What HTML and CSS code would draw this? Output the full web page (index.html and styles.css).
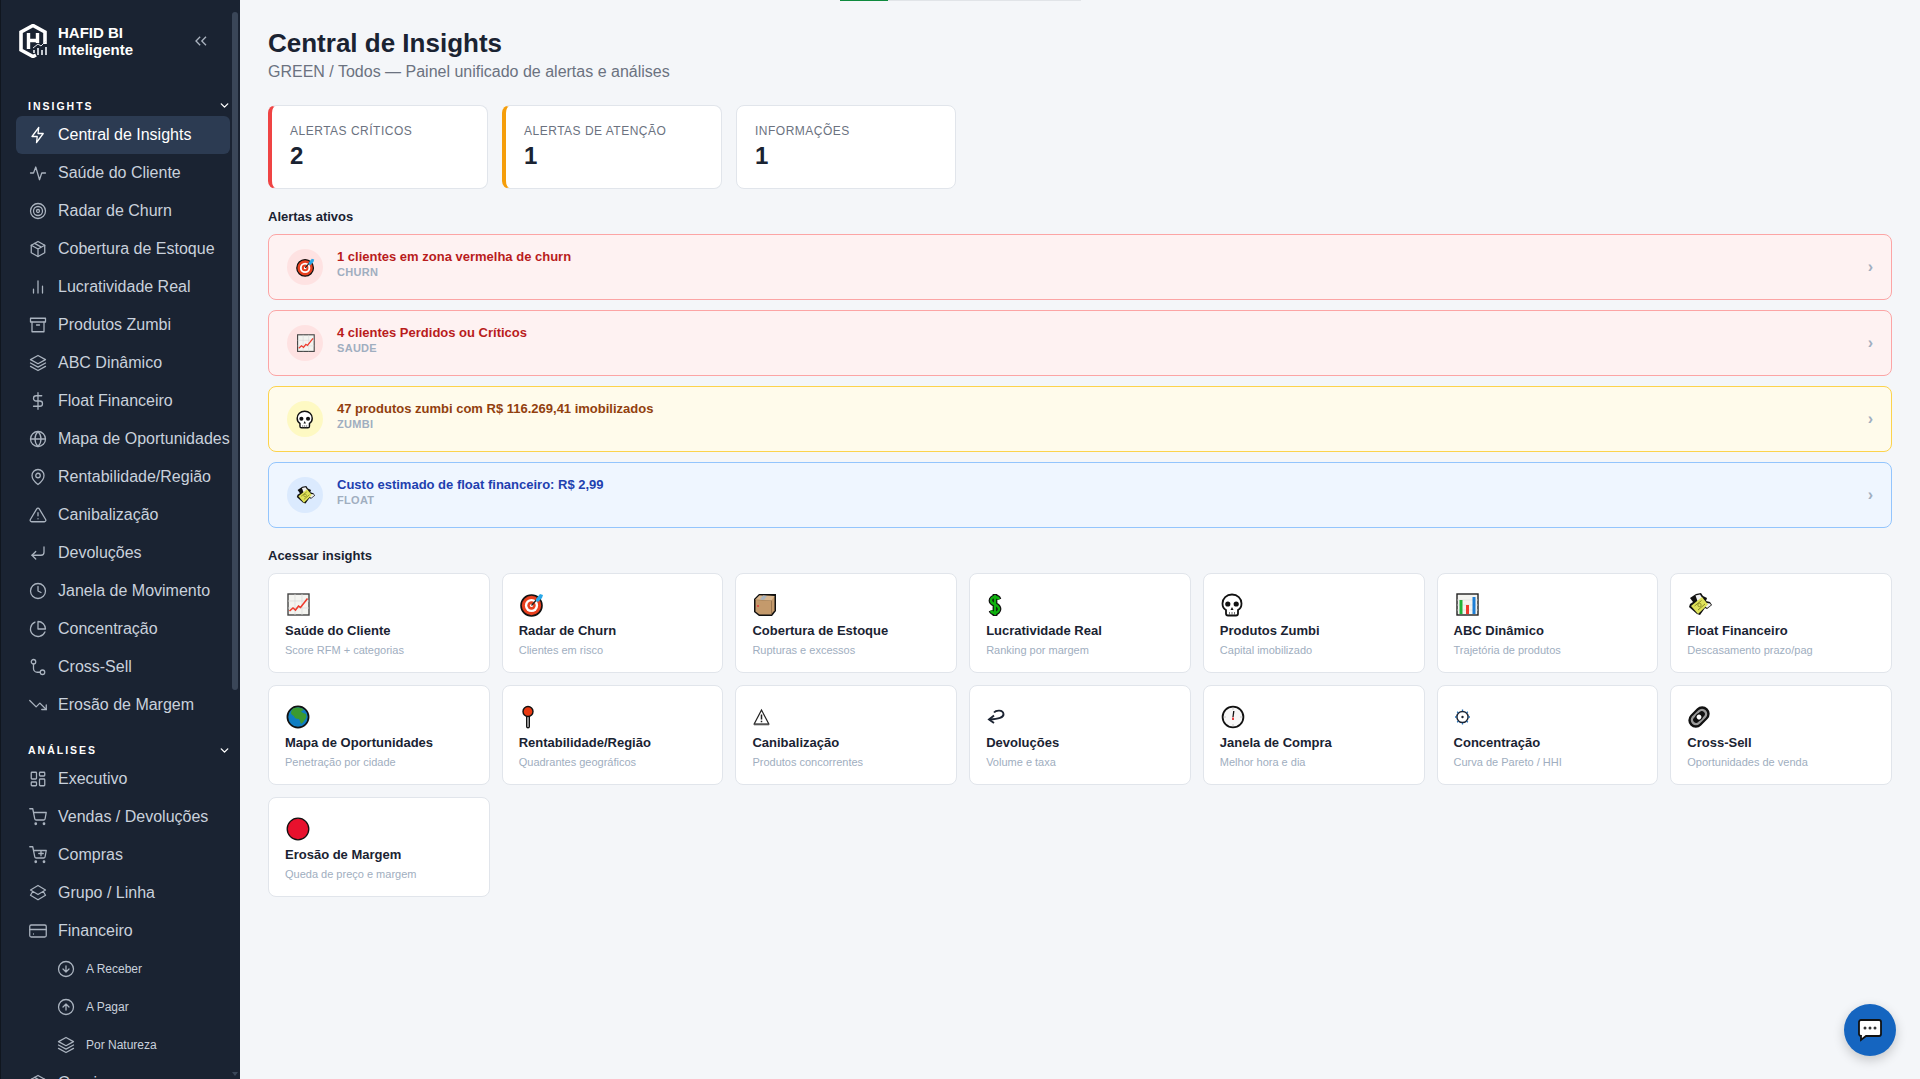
FILE: index.html
```html
<!DOCTYPE html>
<html lang="pt-BR">
<head>
    <meta charset="UTF-8">
    <title>Central de Insights</title>
    <link rel="stylesheet" href="styles.css">
</head>
<body>
    <svg class="defs" width="0" height="0">
        <defs>
            <symbol id="e-chart" viewBox="0 0 24 24"><rect x="2" y="1" width="21" height="21" fill="#f4f4f0" stroke="#444" stroke-width="1.4"/><path d="M2 8h21M2 15h21M9 1v21M16 1v21" stroke="#d8d8d8" stroke-width=".7"/><path d="M3.500 18l3.500-3 2.500 2 3-4 2 1.500 7-9" fill="none" stroke="#ee3a2c" stroke-width="1.6"/></symbol>
            <symbol id="e-target" viewBox="0 0 24 24"><circle cx="11.500" cy="12.500" r="10.500" fill="#e8401f" stroke="#111" stroke-width="1.6"/><circle cx="11.500" cy="12.500" r="6.600" fill="#fff"/><circle cx="11.500" cy="12.500" r="4.200" fill="#e8401f"/><circle cx="11.500" cy="12.500" r="1.600" fill="#fff"/><path d="M11.500 12.500L19 4" stroke="#222" stroke-width="1.4"/><path d="M16 6l4-5 3 1-1 3-4 4-2-1z" fill="#29a8e8"/></symbol>
            <symbol id="e-box" viewBox="0 0 24 24"><path d="M1 6l5-5h17v17l-4 5H6l-5-4z" fill="#111"/><path d="M2.500 6.500l4-4 15 .5v14.500l-3.500 4H6.500l-4-3z" fill="#c49a6c"/><path d="M2.500 6.500l16 1v14" fill="none" stroke="#8f6d47" stroke-width=".8"/><path d="M6.500 2.500l15 .5-3 4.500-16-1z" fill="#d9b78f"/><path d="M10 2.500l4 .5-3 4-4-.5z" fill="#aab4be"/><circle cx="5" cy="13" r="1" fill="#e23b3b"/></symbol>
            <symbol id="e-dollar" viewBox="0 0 24 24"><path d="M12 6.500C11.500 5 10 4 8 4S4 5.500 4 7.500c0 5 8 3 8 8.500 0 2-2 4-4 4s-3.500-1-4-2.500M8 1v22" fill="none" stroke="#111" stroke-width="4.800"/><path d="M12 6.500C11.500 5 10 4 8 4S4 5.500 4 7.500c0 5 8 3 8 8.500 0 2-2 4-4 4s-3.500-1-4-2.500M8 2v20" fill="none" stroke="#0eb10e" stroke-width="2.400"/></symbol>
            <symbol id="e-skull" viewBox="0 0 24 24"><path d="M11 1.500C5.500 1.500 1.500 5.500 1.500 10.500c0 3.500 1.500 5.500 3.500 6.500v3.500c0 1 1 2 2 2h8c1 0 2-1 2-2V17c2-1 3.500-3 3.500-6.500 0-5-4-9-9.500-9z" fill="#fff" stroke="#111" stroke-width="1.8"/><circle cx="6.800" cy="11" r="2.600" fill="#111"/><circle cx="15.200" cy="11" r="2.600" fill="#111"/><path d="M11 14l-1.500 3h3z" fill="#111"/><path d="M8.500 19v3M11 19v3M13.500 19v3" stroke="#666" stroke-width=".9"/></symbol>
            <symbol id="e-bars" viewBox="0 0 24 24"><rect x="2" y="1" width="21" height="21" fill="#f4f4f0" stroke="#222" stroke-width="1.4"/><path d="M2 7h21M2 12h21M2 17h21" stroke="#ddd" stroke-width=".6"/><rect x="4.500" y="7" width="3" height="14" fill="#22b33a"/><rect x="11" y="12" width="3" height="9" fill="#ee3a2c"/><rect x="17.500" y="4" width="3" height="17" fill="#1e7fd6"/></symbol>
            <symbol id="e-wings" viewBox="0 0 24 24"><path d="M8 1l5-1 2 3 4 2-1 3 4 1 2 3-5 4-2-1-5 7-3-1-8-7 1-3 3-2-3-4z" fill="#111"/><path d="M7.500 2.500l4.500-1 3 4.500-5 3.500zM18.500 10l3.500.5 1 1.500-4 3-2.500-2.500z" fill="#f2f2f2"/><path d="M3 13l11-9 6 7.500-10 9.500z" fill="#dfe25a"/><path d="M6.500 13l7-5.500M10 17l7-6" stroke="#7d7f1e" stroke-width=".9"/><circle cx="11.500" cy="12" r="1.700" fill="none" stroke="#7d7f1e" stroke-width=".8"/></symbol>
            <symbol id="e-globe" viewBox="0 0 24 24"><circle cx="12" cy="12" r="10.600" fill="#0f7dc2" stroke="#111" stroke-width="1.7"/><path d="M7 3.500c3-1.500 7-1.500 10 .5 1 1 0 2-2 2 1 2 3 2 5 3 .5 2 .5 3 0 4-2 3-3 5-5 6-1-2-1-4-2-5-3 0-5-1-5-3-2-1-3-2-3-3 0-2 1-3 2-4.500z" fill="#3c9a32"/></symbol>
            <symbol id="e-pin" viewBox="0 0 24 24"><path d="M6.700 11h2.600v10.500a1.300 1.300 0 0 1-2.600 0z" fill="#e6e6e6" stroke="#111" stroke-width="1.4"/><circle cx="8" cy="6.500" r="5" fill="#ea3a12" stroke="#111" stroke-width="1.4"/></symbol>
            <symbol id="e-warn" viewBox="0 0 24 24"><path d="M8.500 5L1.200 19h14.600z" fill="#fff" stroke="#222" stroke-width="1.2"/><path d="M1 19.500h15" stroke="#555" stroke-width="1.6"/><path d="M8.500 9.500v5M8.500 15.800v1.500" stroke="#222" stroke-width="1.5"/></symbol>
            <symbol id="e-back" viewBox="0 0 24 24"><path d="M7 7.500c2-2.500 9-3 9.500 1.500.4 3.500-5 5-14 5.500" fill="none" stroke="#1c2433" stroke-width="1.9"/><path d="M7 10.500l-5 4 5 3.500" fill="none" stroke="#1c2433" stroke-width="1.9"/></symbol>
            <symbol id="e-clock" viewBox="0 0 24 24"><circle cx="12" cy="12" r="10.400" fill="#f7f7f7" stroke="#111" stroke-width="1.8"/><path d="M12 12l.8-6" stroke="#111" stroke-width="1.3"/><path d="M12 12.500V15" stroke="#e02020" stroke-width="1.7"/><path d="M12 3.500v1M12 19.500v1M3.500 12h1M19.500 12h1" stroke="#999"/></symbol>
            <symbol id="e-gear" viewBox="0 0 24 24"><circle cx="7.500" cy="12" r="5.600" fill="#fff" stroke="#1c2433" stroke-width="1.5"/><circle cx="7.500" cy="12" r="1.200" fill="#1c2433"/><path d="M7.500 4.500v1.500M7.500 18v1.500M0 12h1.500M13.500 12H15M2.200 6.700l1 1M11.800 16.300l1 1M2.200 17.300l1-1M11.800 7.700l1-1" stroke="#1c6fb8" stroke-width="1.3"/></symbol>
            <symbol id="e-clip" viewBox="0 0 24 24"><g transform="rotate(-45 11 12)"><rect x="-1" y="4.500" width="24" height="15" rx="7.500" fill="#111"/><rect x="1.500" y="6.800" width="19" height="10.400" rx="5.200" fill="#9a9a9a"/><rect x="4" y="9" width="14" height="6" rx="3" fill="#111"/><circle cx="11" cy="12" r="3.600" fill="#111"/><circle cx="11" cy="12" r="2.400" fill="#fff"/></g></symbol>
            <symbol id="e-dot" viewBox="0 0 24 24"><circle cx="12" cy="12" r="10.800" fill="#e8112d" stroke="#111" stroke-width="1.3"/></symbol>

            <symbol id="i-bolt" viewBox="0 0 24 24"><path d="M13 2L4 14h7l-1 8 9-12h-7z"/></symbol>
            <symbol id="i-pulse" viewBox="0 0 24 24"><path d="M2 12h4l3-8 5 17 3-9h5"/></symbol>
            <symbol id="i-radar" viewBox="0 0 24 24"><circle cx="12" cy="12" r="10"/><circle cx="12" cy="12" r="6"/><circle cx="12" cy="12" r="2"/></symbol>
            <symbol id="i-box" viewBox="0 0 24 24"><path d="M12 2l9 5v10l-9 5-9-5V7z"/><path d="M3 7l9 5 9-5M12 12v10M7.500 4.500l9 5"/></symbol>
            <symbol id="i-bars" viewBox="0 0 24 24"><path d="M12 20V4M18 20v-9M6 20v-5"/></symbol>
            <symbol id="i-archive" viewBox="0 0 24 24"><rect x="2" y="3" width="20" height="5"/><path d="M4 8v13h16V8M10 12h4"/></symbol>
            <symbol id="i-layers" viewBox="0 0 24 24"><path d="M12 2L2 7.500 12 13l10-5.500zM2 12l10 5.500L22 12M2 16.500L12 22l10-5.500"/></symbol>
            <symbol id="i-dollar" viewBox="0 0 24 24"><path d="M12 1v22M17 5H9.500a3.500 3.500 0 0 0 0 7h5a3.500 3.500 0 0 1 0 7H6"/></symbol>
            <symbol id="i-globe" viewBox="0 0 24 24"><circle cx="12" cy="12" r="10"/><path d="M2 12h20M12 2c3 3 4 6.500 4 10s-1 7-4 10c-3-3-4-6.500-4-10s1-7 4-10z"/></symbol>
            <symbol id="i-pin" viewBox="0 0 24 24"><path d="M20 10c0 6-8 12-8 12s-8-6-8-12a8 8 0 0 1 16 0z"/><circle cx="12" cy="10" r="3"/></symbol>
            <symbol id="i-warn" viewBox="0 0 24 24"><path d="M10.300 3.900L1.800 18a2 2 0 0 0 1.700 3h17a2 2 0 0 0 1.700-3L13.700 3.900a2 2 0 0 0-3.400 0zM12 9v4M12 17h.01"/></symbol>
            <symbol id="i-return" viewBox="0 0 24 24"><path d="M9 10l-5 5 5 5"/><path d="M20 4v7a4 4 0 0 1-4 4H4"/></symbol>
            <symbol id="i-clock" viewBox="0 0 24 24"><circle cx="12" cy="12" r="10"/><path d="M12 6v6l4 2"/></symbol>
            <symbol id="i-pie" viewBox="0 0 24 24"><path d="M21.200 15.900A10 10 0 1 1 8 2.800"/><path d="M22 12A10 10 0 0 0 12 2v10z"/></symbol>
            <symbol id="i-route" viewBox="0 0 24 24"><circle cx="6" cy="5" r="3"/><circle cx="18" cy="19" r="3"/><path d="M6 8v6a5 5 0 0 0 5 5h4"/></symbol>
            <symbol id="i-down" viewBox="0 0 24 24"><path d="M1 6l8.500 8.500 5-5L23 18"/><path d="M17 18h6v-6"/></symbol>
            <symbol id="i-grid" viewBox="0 0 24 24"><rect x="3" y="3" width="7" height="9" rx="1"/><rect x="14" y="3" width="7" height="5" rx="1"/><rect x="14" y="12" width="7" height="9" rx="1"/><rect x="3" y="16" width="7" height="5" rx="1"/></symbol>
            <symbol id="i-cart" viewBox="0 0 24 24"><circle cx="9" cy="21" r="1"/><circle cx="20" cy="21" r="1"/><path d="M1 1h4l2.700 13.400a2 2 0 0 0 2 1.600h9.700a2 2 0 0 0 2-1.600L23 6H6"/></symbol>
            <symbol id="i-cartplus" viewBox="0 0 24 24"><circle cx="9" cy="21" r="1"/><circle cx="20" cy="21" r="1"/><path d="M1 1h4l2.700 13.400a2 2 0 0 0 2 1.600h9.700a2 2 0 0 0 2-1.600L23 6H6M16 7v6M13 10h6"/></symbol>
            <symbol id="i-stack" viewBox="0 0 24 24"><path d="M12 2L2 8l10 6 10-6zM2 15l10 6 10-6M5 10l-3 5M19 10l3 5"/></symbol>
            <symbol id="i-card" viewBox="0 0 24 24"><rect x="1" y="4" width="22" height="16" rx="2"/><path d="M1 10h22M6 16h.01"/></symbol>
            <symbol id="i-circdown" viewBox="0 0 24 24"><circle cx="12" cy="12" r="10"/><path d="M8 12l4 4 4-4M12 8v8"/></symbol>
            <symbol id="i-circup" viewBox="0 0 24 24"><circle cx="12" cy="12" r="10"/><path d="M16 12l-4-4-4 4M12 16V8"/></symbol>
            <symbol id="i-chev" viewBox="0 0 24 24"><path d="M6 9l6 6 6-6"/></symbol>
        </defs>
    </svg>

    <div class="layout">
        <aside class="sidebar">
            <div class="brand">
                <svg class="brand-logo" viewBox="0 0 28 34">
                    <path d="M17 31L14 32.500 2 26V8L14 1.500 26 8v12" fill="none" stroke="#fff" stroke-width="3.600"/>
                    <path d="M9.500 9v16M18.500 9v10M9.500 16.500h9" fill="none" stroke="#fff" stroke-width="3.400"/>
                    <path d="M15 29v-3M19 31v-7M23 31v-5M27 31v-8" fill="none" stroke="#c4c9d0" stroke-width="2"/>
                    <path d="M14 24l5-4 3 2 5-5" fill="none" stroke="#e6e8ec" stroke-width="1"/>
                </svg>
                <div class="brand-name">HAFID BI<br>Inteligente</div>
                <svg class="brand-toggle" viewBox="0 0 24 24"><path d="M11 17l-5-5 5-5M18 17l-5-5 5-5"/></svg>
            </div>

            <div class="nav-section">
                <span>INSIGHTS</span>
                <svg class="ico nav-chev"><use href="#i-chev"/></svg>
            </div>
            <a class="nav-item active"><svg class="ico"><use href="#i-bolt"/></svg>Central de Insights</a>
            <a class="nav-item"><svg class="ico"><use href="#i-pulse"/></svg>Saúde do Cliente</a>
            <a class="nav-item"><svg class="ico"><use href="#i-radar"/></svg>Radar de Churn</a>
            <a class="nav-item"><svg class="ico"><use href="#i-box"/></svg>Cobertura de Estoque</a>
            <a class="nav-item"><svg class="ico"><use href="#i-bars"/></svg>Lucratividade Real</a>
            <a class="nav-item"><svg class="ico"><use href="#i-archive"/></svg>Produtos Zumbi</a>
            <a class="nav-item"><svg class="ico"><use href="#i-layers"/></svg>ABC Dinâmico</a>
            <a class="nav-item"><svg class="ico"><use href="#i-dollar"/></svg>Float Financeiro</a>
            <a class="nav-item"><svg class="ico"><use href="#i-globe"/></svg>Mapa de Oportunidades</a>
            <a class="nav-item"><svg class="ico"><use href="#i-pin"/></svg>Rentabilidade/Região</a>
            <a class="nav-item"><svg class="ico"><use href="#i-warn"/></svg>Canibalização</a>
            <a class="nav-item"><svg class="ico"><use href="#i-return"/></svg>Devoluções</a>
            <a class="nav-item"><svg class="ico"><use href="#i-clock"/></svg>Janela de Movimento</a>
            <a class="nav-item"><svg class="ico"><use href="#i-pie"/></svg>Concentração</a>
            <a class="nav-item"><svg class="ico"><use href="#i-route"/></svg>Cross-Sell</a>
            <a class="nav-item"><svg class="ico"><use href="#i-down"/></svg>Erosão de Margem</a>

            <div class="nav-section second">
                <span>ANÁLISES</span>
                <svg class="ico nav-chev"><use href="#i-chev"/></svg>
            </div>
            <a class="nav-item"><svg class="ico"><use href="#i-grid"/></svg>Executivo</a>
            <a class="nav-item"><svg class="ico"><use href="#i-cart"/></svg>Vendas / Devoluções</a>
            <a class="nav-item"><svg class="ico"><use href="#i-cartplus"/></svg>Compras</a>
            <a class="nav-item"><svg class="ico"><use href="#i-stack"/></svg>Grupo / Linha</a>
            <a class="nav-item"><svg class="ico"><use href="#i-card"/></svg>Financeiro</a>
            <a class="nav-item sub"><svg class="ico"><use href="#i-circdown"/></svg>A Receber</a>
            <a class="nav-item sub"><svg class="ico"><use href="#i-circup"/></svg>A Pagar</a>
            <a class="nav-item sub"><svg class="ico"><use href="#i-layers"/></svg>Por Natureza</a>
            <a class="nav-item"><svg class="ico"><use href="#i-box"/></svg>Gerais</a>

            <div class="scroll-thumb"></div>
            <div class="scroll-arrow"></div>
        </aside>

        <main class="content">
            <div class="progress"><div class="progress-fill"></div></div>

            <h1>Central de Insights</h1>
            <p class="subtitle">GREEN / Todos — Painel unificado de alertas e análises</p>

            <div class="stats">
                <div class="stat critical"><div class="stat-label">Alertas críticos</div><div class="stat-value">2</div></div>
                <div class="stat warning"><div class="stat-label">Alertas de atenção</div><div class="stat-value">1</div></div>
                <div class="stat"><div class="stat-label">Informações</div><div class="stat-value">1</div></div>
            </div>

            <h2>Alertas ativos</h2>
            <div class="alerts">
                <div class="alert red">
                    <div class="alert-icon"><svg class="emoji-sm"><use href="#e-target"/></svg></div>
                    <div class="alert-text"><div class="alert-title">1 clientes em zona vermelha de churn</div><div class="alert-tag">CHURN</div></div>
                    <span class="alert-arrow">›</span>
                </div>
                <div class="alert red">
                    <div class="alert-icon"><svg class="emoji-sm"><use href="#e-chart"/></svg></div>
                    <div class="alert-text"><div class="alert-title">4 clientes Perdidos ou Críticos</div><div class="alert-tag">SAUDE</div></div>
                    <span class="alert-arrow">›</span>
                </div>
                <div class="alert yellow">
                    <div class="alert-icon"><svg class="emoji-sm"><use href="#e-skull"/></svg></div>
                    <div class="alert-text"><div class="alert-title">47 produtos zumbi com R$ 116.269,41 imobilizados</div><div class="alert-tag">ZUMBI</div></div>
                    <span class="alert-arrow">›</span>
                </div>
                <div class="alert blue">
                    <div class="alert-icon"><svg class="emoji-sm"><use href="#e-wings"/></svg></div>
                    <div class="alert-text"><div class="alert-title">Custo estimado de float financeiro: R$ 2,99</div><div class="alert-tag">FLOAT</div></div>
                    <span class="alert-arrow">›</span>
                </div>
            </div>

            <h2 class="access">Acessar insights</h2>
            <div class="cards">
                <a class="card"><svg class="emoji"><use href="#e-chart"/></svg><div class="card-title">Saúde do Cliente</div><div class="card-desc">Score RFM + categorias</div></a>
                <a class="card"><svg class="emoji"><use href="#e-target"/></svg><div class="card-title">Radar de Churn</div><div class="card-desc">Clientes em risco</div></a>
                <a class="card"><svg class="emoji"><use href="#e-box"/></svg><div class="card-title">Cobertura de Estoque</div><div class="card-desc">Rupturas e excessos</div></a>
                <a class="card"><svg class="emoji"><use href="#e-dollar"/></svg><div class="card-title">Lucratividade Real</div><div class="card-desc">Ranking por margem</div></a>
                <a class="card"><svg class="emoji"><use href="#e-skull"/></svg><div class="card-title">Produtos Zumbi</div><div class="card-desc">Capital imobilizado</div></a>
                <a class="card"><svg class="emoji"><use href="#e-bars"/></svg><div class="card-title">ABC Dinâmico</div><div class="card-desc">Trajetória de produtos</div></a>
                <a class="card"><svg class="emoji"><use href="#e-wings"/></svg><div class="card-title">Float Financeiro</div><div class="card-desc">Descasamento prazo/pag</div></a>
                <a class="card"><svg class="emoji"><use href="#e-globe"/></svg><div class="card-title">Mapa de Oportunidades</div><div class="card-desc">Penetração por cidade</div></a>
                <a class="card"><svg class="emoji"><use href="#e-pin"/></svg><div class="card-title">Rentabilidade/Região</div><div class="card-desc">Quadrantes geográficos</div></a>
                <a class="card"><svg class="emoji"><use href="#e-warn"/></svg><div class="card-title">Canibalização</div><div class="card-desc">Produtos concorrentes</div></a>
                <a class="card"><svg class="emoji"><use href="#e-back"/></svg><div class="card-title">Devoluções</div><div class="card-desc">Volume e taxa</div></a>
                <a class="card"><svg class="emoji"><use href="#e-clock"/></svg><div class="card-title">Janela de Compra</div><div class="card-desc">Melhor hora e dia</div></a>
                <a class="card"><svg class="emoji"><use href="#e-gear"/></svg><div class="card-title">Concentração</div><div class="card-desc">Curva de Pareto / HHI</div></a>
                <a class="card"><svg class="emoji"><use href="#e-clip"/></svg><div class="card-title">Cross-Sell</div><div class="card-desc">Oportunidades de venda</div></a>
                <a class="card"><svg class="emoji"><use href="#e-dot"/></svg><div class="card-title">Erosão de Margem</div><div class="card-desc">Queda de preço e margem</div></a>
            </div>
        </main>
    </div>

    <button class="chat-btn">
        <svg viewBox="0 0 26 24" width="26" height="24">
            <path d="M4 2h18a2 2 0 0 1 2 2v12a2 2 0 0 1-2 2H9l-5 4v-4a2 2 0 0 1-2-2V4a2 2 0 0 1 2-2z" fill="#fff" stroke="#111" stroke-width="1.8"/>
            <circle cx="8" cy="10" r="1.5" fill="#333"/><circle cx="13" cy="10" r="1.5" fill="#333"/><circle cx="18" cy="10" r="1.5" fill="#333"/>
        </svg>
    </button>
</body>
</html>
```
FILE: styles.css
```css
* {
    margin: 0;
    padding: 0;
    box-sizing: border-box;
    font-family: "Liberation Sans", Arial, sans-serif;
}
html, body {
    height: 100%;
    overflow: hidden;
}
body {
    background: #f4f6f9;
    color: #1a2332;
}
.defs {
    position: absolute;
}
.layout {
    display: flex;
    height: 1079px;
}

/* sidebar */
.sidebar {
    position: relative;
    width: 240px;
    flex-shrink: 0;
    height: 100%;
    overflow: hidden;
    background: #1a2332;
    border-left: 1px solid #10161f;
    padding: 0 10px 0 15px;
    color: #c9d1dc;
}
.brand {
    display: flex;
    align-items: center;
    height: 81px;
    padding-left: 3px;
}
.brand-logo {
    width: 28px;
    height: 34px;
    margin-right: 11px;
    flex-shrink: 0;
}
.brand-name {
    flex: 1;
    color: #fff;
    font-size: 15px;
    font-weight: 700;
    line-height: 17px;
}
.brand-toggle {
    width: 20px;
    height: 20px;
    margin-right: 19px;
    fill: none;
    stroke: #aab3bf;
    stroke-width: 1.6;
}
.nav-section {
    display: flex;
    justify-content: space-between;
    align-items: center;
    height: 35px;
    padding: 14px 0 0 12px;
    color: #fff;
    font-size: 10.5px;
    font-weight: 700;
    letter-spacing: 2px;
}
.nav-section.second {
    height: 36px;
    padding-top: 16px;
}
.nav-item {
    display: flex;
    align-items: center;
    gap: 11px;
    height: 38px;
    padding-left: 13px;
    border-radius: 6px;
    font-size: 16px;
    white-space: nowrap;
}
.nav-item.active {
    background: #2c3b52;
    color: #fff;
}
.nav-item.sub {
    padding-left: 41px;
    font-size: 12px;
    gap: 11px;
}
.ico {
    width: 18px;
    height: 18px;
    flex-shrink: 0;
    fill: none;
    stroke: #aab3bf;
    stroke-width: 1.7;
    stroke-linecap: round;
    stroke-linejoin: round;
}
.nav-item.active .ico {
    stroke: #fff;
}
.nav-section .ico {
    stroke: #fff;
    stroke-width: 2.5;
    width: 13px;
    height: 13px;
    margin-right: -1px;
}
.scroll-thumb {
    position: absolute;
    top: 12px;
    right: 2px;
    width: 6px;
    height: 678px;
    border-radius: 3px;
    background: #3a4658;
}
.scroll-arrow {
    position: absolute;
    bottom: 3px;
    right: 2px;
    border: 3px solid transparent;
    border-top: 4px solid #3a4658;
    border-bottom: 0;
}

/* main */
.content {
    position: relative;
    flex: 1;
    min-width: 0;
    padding: 27px 28px 0;
}
.progress {
    position: absolute;
    top: 0;
    left: 600px;
    width: 241px;
    height: 1px;
    background: #e1e4e8;
}
.progress-fill {
    width: 48px;
    height: 100%;
    background: #0e8a3e;
}
h1 {
    font-size: 26px;
    line-height: 32px;
    font-weight: 700;
    color: #1a2332;
}
.subtitle {
    margin-top: 3px;
    font-size: 16px;
    line-height: 20px;
    color: #6b7280;
}
h2 {
    margin: 20px 0 9px;
    font-size: 13px;
    line-height: 16px;
    font-weight: 700;
    color: #1a2332;
}
.stats {
    display: grid;
    grid-template-columns: repeat(7, 1fr);
    gap: 14px;
    margin-top: 23px;
}
.cards {
    display: grid;
    grid-template-columns: repeat(7, 1fr);
    gap: 12px;
}
.stat {
    height: 84px;
    padding: 18px 18px 0;
    background: #fff;
    border: 1px solid #e1e5eb;
    border-radius: 8px;
}
.stat.critical {
    border-left: 4px solid #ef4444;
}
.stat.warning {
    border-left: 4px solid #f59e0b;
}
.stat-label {
    font-size: 12px;
    line-height: 15px;
    letter-spacing: .5px;
    text-transform: uppercase;
    color: #6b7280;
}
.stat-value {
    margin-top: 3px;
    font-size: 24px;
    line-height: 27px;
    font-weight: 700;
    color: #1a2332;
}
.alerts {
    display: flex;
    flex-direction: column;
    gap: 10px;
}
.alert {
    display: flex;
    align-items: center;
    gap: 14px;
    height: 66px;
    padding: 0 18px;
    border: 1px solid;
    border-radius: 8px;
}
.alert.red {
    background: #fef2f2;
    border-color: #fca5a5;
}
.alert.yellow {
    background: #fffbeb;
    border-color: #fcd34d;
}
.alert.blue {
    background: #eff6ff;
    border-color: #93c5fd;
}
.alert-icon {
    display: flex;
    align-items: center;
    justify-content: center;
    width: 36px;
    height: 36px;
    border-radius: 50%;
}
.red .alert-icon {
    background: #fee2e2;
}
.yellow .alert-icon {
    background: #fef9c3;
}
.blue .alert-icon {
    background: #dbeafe;
}
.emoji-sm {
    width: 19px;
    height: 19px;
}
.alert-text {
    flex: 1;
    padding-bottom: 6px;
}
.alert-title {
    font-size: 13px;
    line-height: 16px;
    font-weight: 700;
}
.red .alert-title {
    color: #b91c1c;
}
.yellow .alert-title {
    color: #92400e;
}
.blue .alert-title {
    color: #1e40af;
}
.alert-tag {
    font-size: 11px;
    line-height: 14px;
    font-weight: 700;
    letter-spacing: .3px;
    color: #a0aec0;
}
.alert-arrow {
    font-size: 16px;
    font-weight: 700;
    color: #a0aec0;
}
.card {
    display: block;
    height: 100px;
    padding: 19px 16px 0;
    background: #fff;
    border: 1px solid #e1e5eb;
    border-radius: 8px;
}
.emoji {
    display: block;
    width: 24px;
    height: 24px;
    margin-left: 1px;
}
.card-title {
    margin-top: 6px;
    font-size: 13px;
    line-height: 16px;
    font-weight: 700;
    color: #1a2332;
}
.card-desc {
    margin-top: 4px;
    font-size: 11px;
    line-height: 14px;
    color: #a0aec0;
}
.chat-btn {
    position: fixed;
    right: 24px;
    bottom: 23px;
    display: flex;
    align-items: center;
    justify-content: center;
    width: 52px;
    height: 52px;
    border: none;
    border-radius: 50%;
    background: #1565c0;
    box-shadow: 0 4px 12px rgba(0, 0, 0, 0.2);
}
```
